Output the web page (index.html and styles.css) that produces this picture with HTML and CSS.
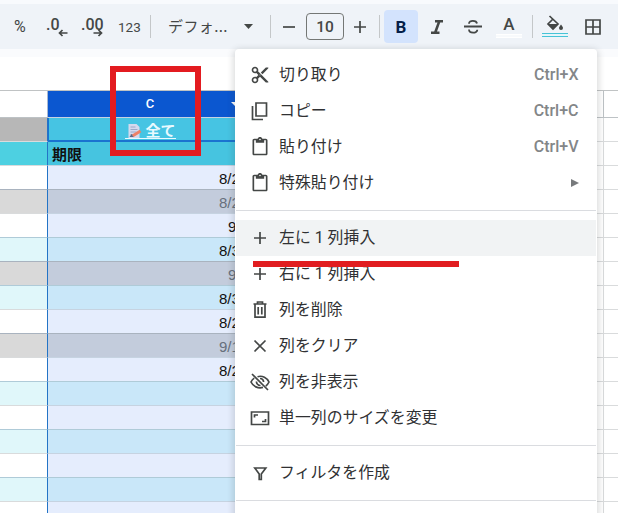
FILE: index.html
```html
<!DOCTYPE html>
<html lang="ja">
<head>
<meta charset="utf-8">
<title>スプレッドシート</title>
<link rel="stylesheet" href="styles.css">
</head>
<body>
<div class="toolbar">
  <span class="tool percent">%</span>
  <span class="tool decimal">.0<svg class="arrow" viewBox="0 0 10 8"><path d="M9.5 4H2M4.5 1L1.5 4l3 3"/></svg></span>
  <span class="tool decimal more">.00<svg class="arrow" viewBox="0 0 10 8"><path d="M.5 4H8M5.500 1l3 3-3 3"/></svg></span>
  <span class="tool number">123</span>
  <i class="divider"></i>
  <span class="tool font">デフォ...</span>
  <svg class="tool caret" viewBox="0 0 9 5"><path d="M0 0h9L4.500 5z"/></svg>
  <i class="divider"></i>
  <svg class="tool minus line" viewBox="0 0 12 12"><path d="M0 6h12"/></svg>
  <span class="size">10</span>
  <svg class="tool plus line" viewBox="0 0 12 12"><path d="M0 6h12M6 0v12"/></svg>
  <i class="divider"></i>
  <span class="bold">B</span>
  <svg class="tool italic" viewBox="0 0 12 14"><path d="M4 0v2.400h2.500L3.200 11.500H0V14h8.500v-2.500H6L9.200 2.400H12V0z"/></svg>
  <svg class="tool strike" viewBox="0 0 18 16"><path d="M0 7.500h18M13 4.500C12.500 1 5 .8 5 4.700M5 10.500c0 4.200 8.300 4.200 8.300.2"/></svg>
  <span class="tool color">A<i class="swatch"></i></span>
  <i class="divider"></i>
  <span class="tool fill"><svg viewBox="0 0 18 17"><path class="bucket" d="M3.500 1L12 9l-5 5-5-5 5-5"/><path class="paint" d="M2 9h10l-5 5.500zM15 9.500c-1 1.500-2 2.500-2 3.500a2 2 0 0 0 4 0c0-1-1-2-2-3.500z"/></svg><i class="swatch cyan"></i></span>
  <svg class="tool borders" viewBox="0 0 16 16"><path d="M1 1h14v14H1zM8 1v14M1 8h14"/></svg>
</div>
<div class="formula"></div>
<div class="sheet">
  <div class="row head"><i class="left"></i><div class="cell"><span>C</span><i class="drop"></i></div><i class="rest"></i><i class="right"></i></div>
  <div class="row title"><i class="left"></i><div class="cell"><span class="link"><svg class="memo" viewBox="0 0 14 15"><path fill="#d5d9ee" d="M1 1h8l3 3v11H1z"/><path stroke="#9ca9c8" d="M3 4h5M3 6.500h7M3 9h6M3 11.500h4"/><path stroke="#ee8067" stroke-width="3" d="M5 13l8-5"/><path fill="#596987" d="M2 14l2-3 2 3z"/></svg><span>全て</span></span></div><i class="rest"></i><i class="right"></i></div>
  <div class="row label"><i class="left"></i><div class="cell">期限</div><i class="rest"></i><i class="right"></i></div>
  <div class="row"><i class="left"></i><div class="cell">8/2</div><i class="rest"></i><i class="right"></i></div>
  <div class="row done"><i class="left"></i><div class="cell">8/2</div><i class="rest"></i><i class="right"></i></div>
  <div class="row"><i class="left"></i><div class="cell short">9</div><i class="rest"></i><i class="right"></i></div>
  <div class="row band"><i class="left"></i><div class="cell">8/3</div><i class="rest"></i><i class="right"></i></div>
  <div class="row done"><i class="left"></i><div class="cell short">9</div><i class="rest"></i><i class="right"></i></div>
  <div class="row band"><i class="left"></i><div class="cell">8/3</div><i class="rest"></i><i class="right"></i></div>
  <div class="row"><i class="left"></i><div class="cell">8/2</div><i class="rest"></i><i class="right"></i></div>
  <div class="row done"><i class="left"></i><div class="cell">9/1</div><i class="rest"></i><i class="right"></i></div>
  <div class="row"><i class="left"></i><div class="cell">8/2</div><i class="rest"></i><i class="right"></i></div>
  <div class="row band"><i class="left"></i><div class="cell"></div><i class="rest"></i><i class="right"></i></div>
  <div class="row"><i class="left"></i><div class="cell"></div><i class="rest"></i><i class="right"></i></div>
  <div class="row band"><i class="left"></i><div class="cell"></div><i class="rest"></i><i class="right"></i></div>
  <div class="row"><i class="left"></i><div class="cell"></div><i class="rest"></i><i class="right"></i></div>
  <div class="row band"><i class="left"></i><div class="cell"></div><i class="rest"></i><i class="right"></i></div>
  <div class="row"><i class="left"></i><div class="cell"></div><i class="rest"></i><i class="right"></i></div>
</div>
<div class="menu">
  <div class="item"><svg viewBox="0 0 24 24"><path d="M9.640 7.640c.23-.5.360-1.050.360-1.640 0-2.210-1.790-4-4-4S2 3.790 2 6s1.790 4 4 4c.59 0 1.140-.13 1.640-.36L10 12l-2.360 2.360C7.140 14.130 6.590 14 6 14c-2.210 0-4 1.790-4 4s1.790 4 4 4 4-1.790 4-4c0-.59-.13-1.140-.36-1.640L12 14l7 7h3v-1L9.640 7.640zM6 8c-1.100 0-2-.89-2-2s.9-2 2-2 2 .89 2 2-.9 2-2 2zm0 12c-1.100 0-2-.89-2-2s.9-2 2-2 2 .89 2 2-.9 2-2 2zm6-7.500c-.28 0-.5-.22-.5-.5s.22-.5.5-.5.5.22.5.5-.22.5-.5.5zM19 3l-6 6 2 2 7-7V3z"/></svg><span>切り取り</span><kbd>Ctrl+X</kbd></div>
  <div class="item"><svg class="outline" viewBox="0 0 20 20"><path d="M6 2h10.500v13H6zM2.500 5v13.500H13"/></svg><span>コピー</span><kbd>Ctrl+C</kbd></div>
  <div class="item"><svg viewBox="0 0 24 24"><path d="M19 2h-4.180C14.400.84 13.300 0 12 0S9.600.84 9.180 2H5c-1.100 0-2 .9-2 2v16c0 1.100.9 2 2 2h14c1.100 0 2-.9 2-2V4c0-1.100-.9-2-2-2zm-7 0c.55 0 1 .45 1 1s-.45 1-1 1-1-.45-1-1 .45-1 1-1zm7 18H5V4h2v3h10V4h2v16z"/></svg><span>貼り付け</span><kbd>Ctrl+V</kbd></div>
  <div class="item"><svg viewBox="0 0 24 24"><path d="M19 2h-4.180C14.400.84 13.300 0 12 0S9.600.84 9.180 2H5c-1.100 0-2 .9-2 2v16c0 1.100.9 2 2 2h14c1.100 0 2-.9 2-2V4c0-1.100-.9-2-2-2zm-7 0c.55 0 1 .45 1 1s-.45 1-1 1-1-.45-1-1 .45-1 1-1zm7 18H5V4h2v3h10V4h2v16z"/></svg><span>特殊貼り付け</span><i class="submenu"></i></div>
  <hr>
  <div class="item hover"><svg class="outline" viewBox="0 0 20 20"><path d="M4 10h12M10 4v12"/></svg><span>左に 1 列挿入</span></div>
  <div class="item"><svg class="outline" viewBox="0 0 20 20"><path d="M4 10h12M10 4v12"/></svg><span>右に 1 列挿入</span></div>
  <div class="item"><svg class="outline" viewBox="0 0 20 20"><path d="M3.500 4h13M7.500 3.500V2h5v1.500M5 4v13.200h10V4M8.200 7v7.500M11.800 7v7.500"/></svg><span>列を削除</span></div>
  <div class="item"><svg class="outline" viewBox="0 0 20 20"><path d="M4.500 4.500l11 11M15.500 4.500l-11 11"/></svg><span>列をクリア</span></div>
  <div class="item"><svg class="outline" viewBox="0 0 20 20"><path d="M7.500 4.700C12.500 3.200 17 5.800 19 10c-.8 1.700-1.800 3-3.200 4M13 15.400C8 16.800 3 14.400 1 10c.7-1.600 1.800-2.900 3.200-3.900M2 2l16 16M10 6.500c2.400 0 3.700 1.700 3.500 3.500M6.500 9.500c-.2 2 1.500 4 4 4"/></svg><span>列を非表示</span></div>
  <div class="item"><svg class="outline" viewBox="0 0 20 20"><path d="M1.500 4h17v12.500h-17zM4.500 9.500V7H8M15.500 11v2.500H12"/></svg><span>単一列のサイズを変更</span></div>
  <hr>
  <div class="item"><svg class="outline" viewBox="0 0 20 20"><path d="M4.800 5h11L11.300 11v5.500H9.200V11z"/></svg><span>フィルタを作成</span></div>
  <hr>
</div>
<div class="mark-box"></div>
<div class="mark-line"></div>
</body>
</html>
```

FILE: styles.css
```css
* { box-sizing: border-box; }
body {
  margin: 0;
  width: 618px;
  height: 513px;
  overflow: hidden;
  position: relative;
  background: #fff;
  font-family: Roboto, "Noto Sans CJK JP", sans-serif;
  color: #444746;
}
i { font-style: normal; display: block; }
svg { display: block; flex: none; }

.toolbar {
  height: 49px;
  border-top: 4px solid #f8fafd;
  background: #eff3f8;
  display: flex;
  align-items: center;
  padding-left: 14px;
}
.tool { flex: none; }
.percent { width: 32px; font-size: 16px; }
.decimal {
  width: 35px;
  height: 22px;
  font-size: 16px;
  font-weight: 500;
  line-height: 18px;
  display: flex;
}
.arrow { width: 10px; height: 8px; margin: 13px 0 0 -2px; fill: none; stroke: #444746; stroke-width: 1.700; }
.more .arrow { margin-left: -11px; }
.number { width: 32px; margin-left: 2px; font-size: 13.500px; line-height: 14px; }
.divider { width: 1px; height: 23px; background: #c4c7c9; flex: none; }
.number + .divider { margin-left: 0; margin-right: 17px; }
.font { width: 76px; font-size: 15px; font-family: "Noto Sans CJK JP", sans-serif; line-height: 22px; font-weight: 400; letter-spacing: .4px; white-space: nowrap; margin-top: -2px; }
.caret { width: 9px; height: 5px; margin-right: 17px; fill: #444746; }
.line { width: 12px; height: 12px; stroke: #444746; stroke-width: 1.700; fill: none; }
.minus { margin: 0 11px 0 12px; }
.size {
  flex: none;
  width: 38px;
  height: 27px;
  border: 1px solid #747775;
  border-radius: 4px;
  text-align: center;
  font-size: 15.500px;
  line-height: 26px;
  font-weight: 500;
}
.plus { margin: 0 13px 0 10px; }
.bold {
  flex: none;
  width: 34px;
  height: 33px;
  margin: 0 13px 0 4px;
  border-radius: 4px;
  background: #d3e3fd;
  color: #041e49;
  font-size: 17px;
  font-weight: 700;
  line-height: 34px;
  text-align: center;
}
.italic { width: 12px; height: 14px; fill: #444746; margin-right: 21px; }
.strike { width: 18px; height: 16px; margin-right: 14px; fill: none; stroke: #444746; stroke-width: 1.800; }
.color { width: 26px; height: 22px; margin-right: 10px; text-align: center; font-size: 17px; line-height: 16px; font-weight: 500; }
.swatch { height: 4px; border: solid #fff; border-width: 1px 0; background: #f8fafc; margin-top: 2px; }
.fill { width: 26px; height: 23px; margin: 0 17px 0 9px; }
.fill svg { width: 18px; height: 17px; margin-left: 4px; }
.bucket { fill: none; stroke: #444746; stroke-width: 1.700; }
.paint { fill: #444746; }
.cyan { margin-top: 1px; border-color: #46c3d6; background: #e5f5fa; }
.borders { width: 16px; height: 16px; fill: none; stroke: #444746; stroke-width: 1.700; }

.formula { height: 42px; border-top: 8px solid #fafbfd; border-bottom: 1px solid #c0c3c4; }

.row { height: 24px; display: grid; grid-template-columns: 48px 204px 351px 1fr; }
.row > * { border-bottom: 1px solid #d9dbdc; }
.row .left { border-right: 1px solid #2374c6; }
.row .right { border-left: 1px solid #d9dbdc; }
.row .cell {
  padding-left: 171px;
  background: #e5edfd;
  color: #111;
  font: 15px/25px "Liberation Sans", "Noto Sans CJK JP", sans-serif;
  overflow: hidden;
  white-space: nowrap;
  border-bottom-color: #c6d3e1;
}
.row .short { padding-left: 180px; }
.band .left { background: #e0f7fa; }
.band .cell { background: #c9e7f9; }
.done .left { background: #d9d9d9; }
.done .cell { background: #c3ccdc; color: #67707d; }
.row:has(+ .done) > .left, .row:has(+ .done) > .cell { border-bottom-color: #a9b3bf; }
.row:has(+ .band) > .left, .row:has(+ .band) > .cell { border-bottom-color: #afcbd8; }
.head { height: 27px; }
.head > * { border-bottom-color: #bdc2c5; }
.head .left { border-right-color: #a9b9d2; }
.head .right { border-left-color: #bdc2c5; }
.head .cell {
  padding: 0;
  background: #0b57d0;
  color: #fff;
  display: flex;
  justify-content: center;
  align-items: center;
  font: 500 13px/26px Roboto, sans-serif;
  position: relative;
}
.drop { position: absolute; left: 183px; top: 11px; border: solid transparent; border-width: 5px 5px 0; border-top-color: #fff; }
.title .left { background: #b7b7b7; }
.title .cell {
  padding: 0;
  background: #46c4e3;
  border: solid #1a73d0;
  border-width: 0 0 2px 1px;
  color: #e9faff;
  display: flex;
  justify-content: center;
  align-items: flex-end;
  font-weight: 700;
}
.link { display: flex; align-items: center; height: 20px; line-height: 20px; border-bottom: 1px solid #e9faff; margin-bottom: 1px; }
.link span { padding-top: 4px; }
.memo { width: 15px; height: 15px; margin: 3px 3px 0 2px; fill: none; }
.title .cell, .label .cell { font-size: 15px; }
.label .left { background: #4dd0e1; }
.label .cell { padding-left: 4px; background: #46c4e0; font-weight: 700; }

.menu {
  position: absolute;
  left: 235px;
  top: 49px;
  width: 362px;
  height: 480px;
  padding: 8px 1px;
  border-radius: 4px;
  background: #fff;
  box-shadow: 0 2px 6px 2px rgba(60, 64, 67, .18);
}
.item { height: 36px; display: flex; align-items: center; padding: 0 17.500px 0 13.500px; font-size: 15.900px; color: #303133; }
.item svg { width: 20px; height: 20px; margin-right: 9.500px; fill: #444746; }
.item .outline { fill: none; stroke: #444746; stroke-width: 1.700; }
.item span { line-height: 24px; }
.item kbd { margin-left: auto; font: 500 16px/20px Roboto, sans-serif; color: #838688; }
.hover { background: #f1f3f4; }
.submenu { margin-left: auto; border: solid transparent; border-width: 4px 0 4px 8px; border-left-color: #777a7c; }
hr { margin: 9px 0; border: 0; height: 1px; background: #dadce0; }

.mark-box { position: absolute; left: 110px; top: 66px; width: 91px; height: 90px; border: 6px solid #e31b20; }
.mark-line { position: absolute; left: 253px; top: 261px; width: 206px; height: 6px; background: #e11d20; }
```
